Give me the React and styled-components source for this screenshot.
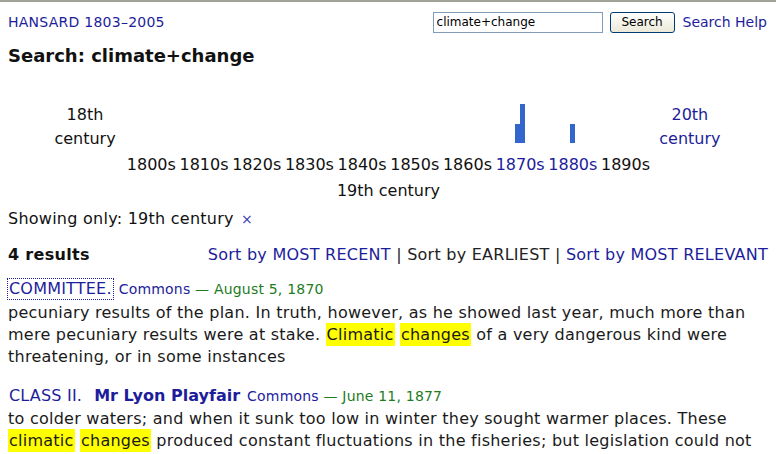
import React from 'react';
import styled, { createGlobalStyle } from 'styled-components';

const LINK = '#1d1d9b';
const GREEN = '#1e7b1e';
const BAR = '#3366cc';

const GlobalStyle = createGlobalStyle`
  html, body {
    margin: 0;
    padding: 0;
    background: #fff;
  }
  body {
    font-family: "DejaVu Sans", Verdana, sans-serif;
    color: #111;
  }
`;

const Page = styled.div`
  border-top: 2px solid #a3a39a;
  padding: 0 8px;
  width: 776px;
  box-sizing: border-box;
`;

const Header = styled.div`
  display: flex;
  align-items: center;
  justify-content: space-between;
  height: 40px;
`;

const Brand = styled.a`
  color: ${LINK};
  font-size: 14px;
  letter-spacing: 0.25px;
  text-decoration: none;
`;

const SearchForm = styled.form`
  display: flex;
  align-items: center;
  gap: 7px;
  margin-right: 1px;
`;

const SearchInput = styled.input`
  width: 170px;
  height: 21px;
  box-sizing: border-box;
  border: 1px solid #7f9db9;
  font-family: "DejaVu Sans", sans-serif;
  font-size: 12px;
  padding: 0 3px;
  color: #000;
`;

const SearchButton = styled.button`
  width: 65px;
  height: 21px;
  border: 1px solid #003c74;
  border-radius: 3px;
  background: linear-gradient(#ffffff, #ece9d8);
  font-family: "DejaVu Sans", sans-serif;
  font-size: 12px;
  color: #000;
  padding: 0;
`;

const HelpLink = styled.a`
  color: ${LINK};
  font-size: 14px;
  text-decoration: none;
  margin-left: 1px;
`;

const Title = styled.h2`
  margin: 3px 0 0;
  font-size: 18px;
  line-height: 22px;
  font-weight: bold;
`;

const Timeline = styled.div`
  display: grid;
  grid-template-columns: 80px repeat(10, 52.7px) 76px;
  grid-template-rows: 60px 24px 24px;
  margin: 26px 0 0 37px;
  font-size: 16px;
`;

const Century = styled.div`
  grid-row: 1;
  grid-column: ${p => p.$col};
  align-self: end;
  text-align: center;
  line-height: 24px;
  padding-bottom: 2px;
  color: ${p => (p.$link ? LINK : '#111')};
`;

const BarCell = styled.div`
  grid-row: 1;
  display: flex;
  align-items: flex-end;
  justify-content: center;
  padding-bottom: 10px;
`;

const Bar = styled.span`
  display: block;
  width: 5px;
  background: ${BAR};
`;

const Decade = styled.div`
  grid-row: 2;
  text-align: center;
  line-height: 24px;
  color: ${p => (p.$link ? LINK : '#111')};
`;

const CenturyLabel = styled.div`
  grid-row: 3;
  grid-column: 2 / span 10;
  text-align: center;
  line-height: 24px;
  margin-top: 2px;
`;

const Filter = styled.div`
  font-size: 16px;
  letter-spacing: 0.25px;
  line-height: 24px;
  margin-top: 6px;
`;

const Remove = styled.a`
  color: #3a3ab0;
  font-size: 14px;
  text-decoration: none;
  margin-left: 2px;
`;

const ResultsBar = styled.div`
  display: flex;
  justify-content: space-between;
  align-items: center;
  margin-top: 13px;
  font-size: 16px;
  line-height: 22px;
`;

const Count = styled.strong`
  font-size: 16px;
  letter-spacing: 0.3px;
`;

const Sort = styled.div`
  color: #222;
  white-space: pre;
  letter-spacing: 0.25px;
`;

const SortLink = styled.a`
  color: ${LINK};
  text-decoration: none;
`;

const Result = styled.div`
  margin-top: ${p => (p.$first ? '11px' : '16px')};
`;

const ResultHead = styled.div`
  display: flex;
  align-items: baseline;
  gap: 6px;
  line-height: 24px;
  margin-bottom: ${p => (p.$loose ? '1px' : '0')};
`;

const Section = styled.a`
  color: ${LINK};
  font-size: 16px;
  letter-spacing: 0.2px;
  line-height: 20px;
  text-decoration: none;
  outline: ${p => (p.$focus ? `1px dotted ${LINK}` : 'none')};
  outline-offset: 0;
  padding: 0 1px;
`;

const Speaker = styled.span`
  font-weight: bold;
  letter-spacing: 0;
  margin-left: 12px;
`;

const Meta = styled.span`
  font-size: 14px;
  letter-spacing: 0.2px;
  color: ${GREEN};
`;

const House = styled.span`
  color: ${LINK};
`;

const Snippet = styled.p`
  margin: 0;
  font-size: 16px;
  letter-spacing: 0.25px;
  line-height: 22px;
  color: #1a1a1a;
`;

const Mark = styled.mark`
  background: #ffff00;
  color: inherit;
  padding: 2px 1px;
`;

const decades = [
  { label: '1800s' },
  { label: '1810s' },
  { label: '1820s' },
  { label: '1830s' },
  { label: '1840s' },
  { label: '1850s' },
  { label: '1860s' },
  { label: '1870s', bars: [19, 39], link: true },
  { label: '1880s', bars: [19], link: true },
  { label: '1890s' },
];

export default function App() {
  return (
    <>
      <GlobalStyle />
      <Page>
        <Header>
          <Brand href="#">HANSARD 1803–2005</Brand>
          <SearchForm onSubmit={e => e.preventDefault()}>
            <SearchInput defaultValue="climate+change" />
            <SearchButton type="submit">Search</SearchButton>
            <HelpLink href="#">Search Help</HelpLink>
          </SearchForm>
        </Header>

        <Title>Search: climate+change</Title>

        <Timeline>
          <Century $col={1}>18th<br />century</Century>
          {decades.map((d, i) => (
            <BarCell key={d.label} style={{ gridColumn: i + 2 }}>
              {(d.bars || []).map((h, j) => (
                <Bar key={j} style={{ height: h }} />
              ))}
            </BarCell>
          ))}
          <Century $col={12} $link>20th<br />century</Century>
          {decades.map((d, i) => (
            <Decade key={d.label} $link={d.link} style={{ gridColumn: i + 2 }}>
              {d.label}
            </Decade>
          ))}
          <CenturyLabel>19th century</CenturyLabel>
        </Timeline>

        <Filter>
          Showing only: 19th century <Remove href="#">×</Remove>
        </Filter>

        <ResultsBar>
          <Count>4 results</Count>
          <Sort>
            <SortLink href="#">Sort by MOST RECENT</SortLink>
            {' | Sort by EARLIEST | '}
            <SortLink href="#">Sort by MOST RELEVANT</SortLink>
          </Sort>
        </ResultsBar>

        <Result $first>
          <ResultHead $loose>
            <Section href="#" $focus>COMMITTEE.</Section>
            <Meta><House>Commons</House> — August 5, 1870</Meta>
          </ResultHead>
          <Snippet>
            pecuniary results of the plan. In truth, however, as he showed last year, much more than<br />
            mere pecuniary results were at stake. <Mark>Climatic</Mark> <Mark>changes</Mark> of a very dangerous kind were<br />
            threatening, or in some instances
          </Snippet>
        </Result>

        <Result>
          <ResultHead>
            <Section href="#">CLASS II.<Speaker>Mr Lyon Playfair</Speaker></Section>
            <Meta><House>Commons</House> — June 11, 1877</Meta>
          </ResultHead>
          <Snippet>
            to colder waters; and when it sunk too low in winter they sought warmer places. These<br />
            <Mark>climatic</Mark> <Mark>changes</Mark> produced constant fluctuations in the fisheries; but legislation could not
          </Snippet>
        </Result>
      </Page>
    </>
  );
}
